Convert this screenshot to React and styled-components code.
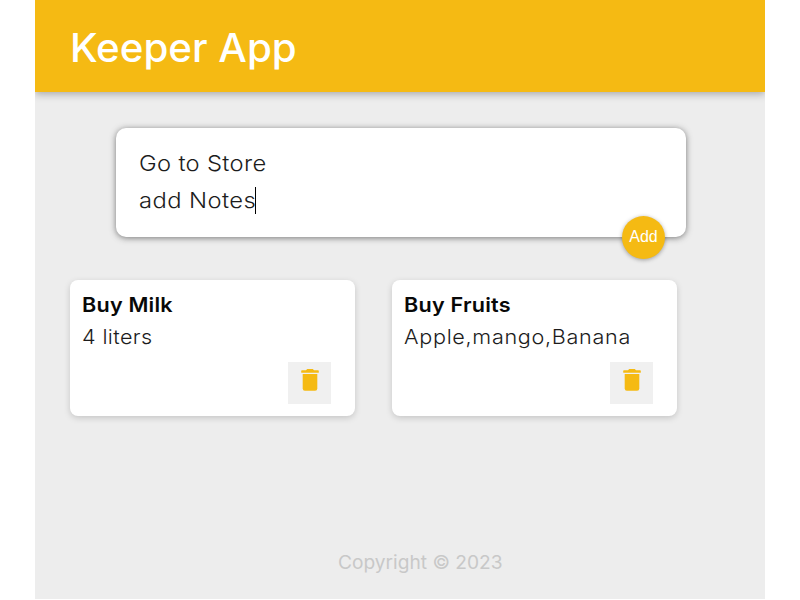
import React from "react";
import styled, { createGlobalStyle } from "styled-components";

const GlobalStyle = createGlobalStyle`
  * { box-sizing: border-box; }
  body { margin: 0; background: #fff; overflow: hidden; font-family: Inter, sans-serif; }
  h1, h2, p { margin: 0; font-weight: 400; }
`;

const Page = styled.div`
  width: 730px;
  height: 599px;
  margin: 0 auto;
  background: #ededed;
  display: flex;
  flex-direction: column;
  overflow: hidden;
`;

const Header = styled.header`
  height: 92px;
  flex: none;
  padding: 0 35px;
  background: #f5ba13;
  box-shadow: 0 2px 8px rgba(0, 0, 0, 0.3);
`;

/* Stretches the letterforms to a wider, rounder cut. */
const Wide = styled.span`
  display: inline-block;
  transform: scaleX(${(p) => p.$scale || 1.08});
  transform-origin: left center;
  letter-spacing: ${(p) => p.$spacing || "0"};
  white-space: nowrap;
`;

const Title = styled.h1`
  color: #fff;
  font-size: 39px;
  line-height: 95px;
  font-weight: 500;
`;

const NoteForm = styled.form`
  position: relative;
  width: 570px;
  height: 109.5px;
  flex: none;
  margin: 35.5px 0 0 81px;
  padding: 17px 23px;
  border-radius: 10px;
  background: #fff;
  box-shadow: 0 1px 6px rgba(90, 90, 90, 0.8);
`;

const Field = styled.div`
  height: 37px;
  display: flex;
  align-items: center;
  color: #1c1c1c;
  font-size: 22px;
  font-weight: 300;
`;

const Caret = styled.span`
  width: 1px;
  height: 27px;
  margin-left: 8px;
  background: #000;
`;

const AddButton = styled.button`
  position: absolute;
  right: 21px;
  bottom: -22px;
  width: 43px;
  height: 43px;
  padding: 0 0 2px;
  border: 0;
  border-radius: 50%;
  background: #f5ba13;
  color: #fff;
  font: 16px "Liberation Sans", sans-serif;
  box-shadow: 0 1px 4px rgba(0, 0, 0, 0.35);
`;

const Notes = styled.main`
  display: flex;
  gap: 37.5px;
  margin: 42.5px 0 0 35px;
`;

const Card = styled.article`
  width: 284.5px;
  height: 136.5px;
  padding: 12px;
  border-radius: 8px;
  background: #fff;
  box-shadow: 0 2px 6px rgba(0, 0, 0, 0.17);
  display: flex;
  flex-direction: column;
`;

const CardTitle = styled.h2`
  height: 28px;
  line-height: 27px;
  color: #080808;
  font-size: 20px;
  font-weight: 600;
`;

const CardText = styled.p`
  height: 34px;
  line-height: 36px;
  color: #1c1c1c;
  font-size: 20px;
  font-weight: 300;
`;

const DeleteButton = styled.button`
  width: 43px;
  height: 43px;
  margin: 8.5px 11.5px 0 auto;
  padding: 0 0 5px;
  border: 0;
  background: #f0f0f0;
  display: flex;
  align-items: center;
  justify-content: center;
`;

const Footer = styled.footer`
  margin: auto 0 24px 302.5px;
  line-height: 26px;
  color: #c8c8c8;
  font-size: 18.5px;
  font-weight: 400;
`;

const TrashIcon = () => (
  <svg width="18" height="22" viewBox="0 0 18 22" fill="#f5ba13" aria-hidden="true">
    <path d="M5 1.2 6.2 0h5.6L13 1.2h4a.8.8 0 0 1 .8.8v1.2a.6.6 0 0 1-.6.6H.8a.6.6 0 0 1-.6-.6V2a.8.8 0 0 1 .8-.8Z" />
    <path d="M1.7 5h14.6v14.6a2.2 2.2 0 0 1-2.2 2.2H3.9a2.2 2.2 0 0 1-2.2-2.2Z" />
  </svg>
);

const notes = [
  { title: "Buy Milk", text: "4 liters", spacing: "0.35px" },
  { title: "Buy Fruits", text: "Apple,mango,Banana", spacing: "0.64px" },
];

export default function App() {
  return (
    <>
      <GlobalStyle />
      <Page>
        <Header>
          <Title>
            <Wide $scale={1.033}>Keeper App</Wide>
          </Title>
        </Header>
        <NoteForm>
          <Field>
            <Wide $spacing="0.3px">Go to Store</Wide>
          </Field>
          <Field>
            <Wide $spacing="0.38px">add Notes</Wide>
            <Caret />
          </Field>
          <AddButton type="button">Add</AddButton>
        </NoteForm>
        <Notes>
          {notes.map((n) => (
            <Card key={n.title}>
              <CardTitle>
                <Wide $spacing="0.2px">{n.title}</Wide>
              </CardTitle>
              <CardText>
                <Wide $spacing={n.spacing}>{n.text}</Wide>
              </CardText>
              <DeleteButton type="button" aria-label="Delete">
                <TrashIcon />
              </DeleteButton>
            </Card>
          ))}
        </Notes>
        <Footer>
          <Wide $scale={1.035}>Copyright © 2023</Wide>
        </Footer>
      </Page>
    </>
  );
}
